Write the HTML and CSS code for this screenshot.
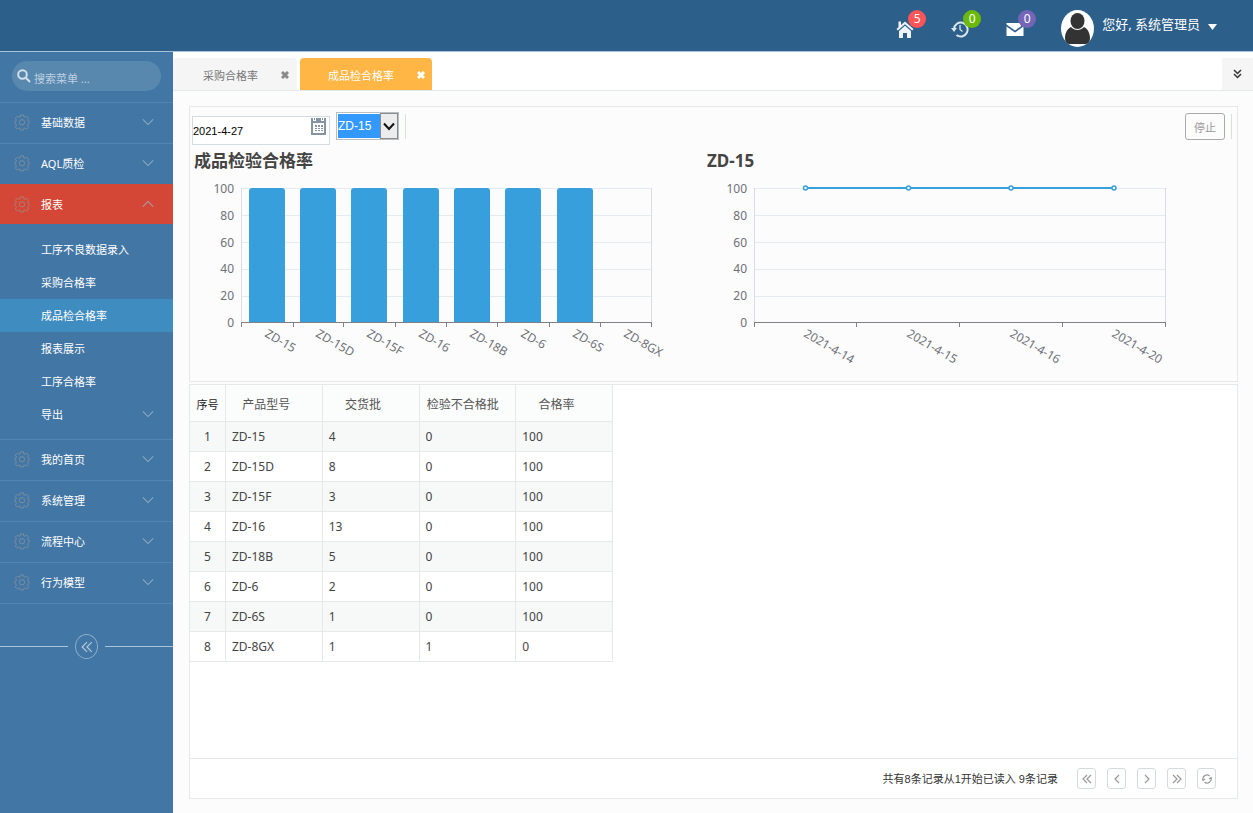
FILE: index.html
```html
<!DOCTYPE html>
<html lang="zh-CN">
<head>
    <meta charset="UTF-8">
    <meta name="viewport" content="width=device-width, initial-scale=1.0">
    <title>成品检合格率</title>
    <link rel="stylesheet" href="styles.css">
</head>
<body>
    <!-- shared icons -->
    <svg class="symbols" aria-hidden="true">
        <symbol id="gear" viewBox="0 0 18 18">
            <path d="M7.4 1h3.2l.5 2.2 1.2.5 2-1.2 2.2 2.2-1.2 2 .5 1.2 1.2.4v2.4l-1.2.8-.5 1.3 1.2 1.9-2.2 2.2-2-1.2-1.2.5-.5 1.8H7.4l-.5-1.8-1.2-.5-2 1.2-2.2-2.2 1.2-1.9-.5-1.3L1 10.700V8.300l1.200-.4.5-1.200-1.200-2 2.200-2.200 2 1.200 1.200-.5z"/>
            <circle cx="9" cy="9.300" r="3"/>
        </symbol>
        <symbol id="down" viewBox="0 0 14 8"><path d="M1 1l6 6 6-6"/></symbol>
        <symbol id="up" viewBox="0 0 14 8"><path d="M1 7l6-6 6 6"/></symbol>
        <symbol id="cross" viewBox="0 0 8 8"><path d="M1 1l6 6M7 1L1 7"/></symbol>
        <symbol id="double-left" viewBox="0 0 10 10"><path d="M5 1L1 5l4 4M9 1L5 5l4 4"/></symbol>
        <symbol id="double-right" viewBox="0 0 10 10"><path d="M1 1l4 4-4 4M5 1l4 4-4 4"/></symbol>
    </svg>

    <header class="header">
        <a class="header-link" href="#" aria-label="首页">
            <svg width="18" height="18" viewBox="0 0 18 18"><path fill="#f0f4f8" d="M9 1.500L17.500 9l-1.300 1.400L9 4.200l-7.200 6.200L.5 9l2-1.800V1.500H5V5zM9 5.800l6 5.200v7h-4v-5H7v5H3v-7z"/></svg>
            <span class="badge badge-red">5</span>
        </a>
        <a class="header-link" href="#" aria-label="历史">
            <svg width="18" height="18" viewBox="0 0 18 18"><path fill="none" stroke="#dbe6ef" stroke-width="2" d="M3 9a6.800 7 0 1 1 2.500 6"/><path fill="#dbe6ef" d="M0 8h6l-3 4z"/><path fill="none" stroke="#dbe6ef" stroke-width="1.300" d="M9 5v4.500l2.500 2"/></svg>
            <span class="badge badge-green">0</span>
        </a>
        <a class="header-link" href="#" aria-label="消息">
            <svg width="18" height="18" viewBox="0 0 18 18"><path fill="#fff" d="M.5 3h17v1.500L9 10.500.5 4.500zM.5 6.500l8.500 6 8.500-6V16H.5z"/></svg>
            <span class="badge badge-purple">0</span>
        </a>
        <button class="user" type="button">
            <svg class="avatar" width="33" height="37" viewBox="0 0 33 37">
                <ellipse cx="16.500" cy="18.500" rx="16.500" ry="18.500" fill="#fff"/>
                <ellipse cx="16.500" cy="11" rx="7" ry="8" fill="#333"/>
                <path fill="#333" d="M10 17c3.500 4 9.500 4 13 0 3.500 1.500 6 6 6 11 0 3.500-2 6-5 6H9c-3 0-5-2.500-5-6 0-5 2.500-9.500 6-11z"/>
            </svg>
            <span>您好, 系统管理员</span>
            <svg width="9" height="6" viewBox="0 0 9 6"><path fill="#fff" d="M0 0h9L4.500 6z"/></svg>
        </button>
    </header>

    <div class="layout">
        <aside class="sidebar">
            <div class="search">
                <svg width="14" height="14" viewBox="0 0 14 14"><circle cx="5.500" cy="5.500" r="4.300"/><path d="M8.800 8.800L13 13"/></svg>
                <input type="text" placeholder="搜索菜单 ..." aria-label="搜索菜单">
            </div>
            <nav class="menu">
                <a class="menu-item" href="#"><svg class="gear"><use href="#gear"/></svg><span>基础数据</span><svg class="arrow"><use href="#down"/></svg></a>
                <a class="menu-item" href="#"><svg class="gear"><use href="#gear"/></svg><span>AQL质检</span><svg class="arrow"><use href="#down"/></svg></a>
                <a class="menu-item active" href="#"><svg class="gear"><use href="#gear"/></svg><span>报表</span><svg class="arrow"><use href="#up"/></svg></a>
                <div class="submenu">
                    <a href="#">工序不良数据录入</a>
                    <a href="#">采购合格率</a>
                    <a class="current" href="#">成品检合格率</a>
                    <a href="#">报表展示</a>
                    <a href="#">工序合格率</a>
                    <a href="#"><span>导出</span><svg class="arrow"><use href="#down"/></svg></a>
                </div>
                <a class="menu-item" href="#"><svg class="gear"><use href="#gear"/></svg><span>我的首页</span><svg class="arrow"><use href="#down"/></svg></a>
                <a class="menu-item" href="#"><svg class="gear"><use href="#gear"/></svg><span>系统管理</span><svg class="arrow"><use href="#down"/></svg></a>
                <a class="menu-item" href="#"><svg class="gear"><use href="#gear"/></svg><span>流程中心</span><svg class="arrow"><use href="#down"/></svg></a>
                <a class="menu-item" href="#"><svg class="gear"><use href="#gear"/></svg><span>行为模型</span><svg class="arrow"><use href="#down"/></svg></a>
            </nav>
            <div class="collapse">
                <button type="button" aria-label="收起菜单"><svg width="12" height="12"><use href="#double-left"/></svg></button>
            </div>
        </aside>

        <main class="main">
            <div class="tabs">
                <div class="tab">
                    <a href="#">采购合格率</a>
                    <button type="button" aria-label="关闭采购合格率"><svg width="8" height="8"><use href="#cross"/></svg></button>
                </div>
                <div class="tab tab-active">
                    <a href="#">成品检合格率</a>
                    <button type="button" aria-label="关闭成品检合格率"><svg width="8" height="8"><use href="#cross"/></svg></button>
                </div>
                <button class="tabs-more" type="button" aria-label="更多标签">
                    <svg width="9" height="10" viewBox="0 0 9 10"><path d="M1 1l3.500 3.500L8 1M1 5l3.500 3.500L8 5"/></svg>
                </button>
            </div>

            <div class="content">
                <section class="panel">
                    <div class="toolbar">
                        <div class="date-box">
                            <input type="text" value="2021-4-27" aria-label="日期">
                            <button type="button" aria-label="选择日期">
                                <svg width="15" height="18" viewBox="0 0 15 18">
                                    <path fill="#8494a3" d="M0 1h2v3h3V1h5v3h3V1h2v17H0z"/>
                                    <path fill="#8494a3" d="M3 1h1v2H3zM11 1h1v2h-1z"/>
                                    <path fill="#fff" d="M2 6h11v10H2z"/>
                                    <path fill="#8494a3" d="M4 8h2v2H4zM7 8h2v2H7zM10 8h2v2h-2zM4 11h2v1H4zM7 11h2v1H7zM10 11h2v1h-2zM4 13h2v1H4zM7 13h2v1H7zM10 13h2v1h-2z"/>
                                </svg>
                            </button>
                        </div>
                        <div class="select-box">
                            <select aria-label="产品型号">
                                <option>ZD-15</option>
                                <option>ZD-15D</option>
                                <option>ZD-15F</option>
                                <option>ZD-16</option>
                            </select>
                            <span class="select-arrow"><svg width="12" height="9" viewBox="0 0 12 9"><path d="M1 1.500l5 5.500 5-5.500"/></svg></span>
                        </div>
                        <span class="divider"></span>
                        <button class="stop-button" type="button">停止</button>
                        <span class="divider"></span>
                    </div>

                    <div class="charts">
                        <div class="chart">
                            <h2>成品检验合格率</h2>
                            <svg viewBox="0 0 513 206" role="img" aria-label="成品检验合格率">
                                <path class="grid-line" d="M51 13.500h411M51 40.500h411M51 67.500h411M51 94.500h411M51 121.500h411"/>
                                <path class="frame" d="M51.500 13v135M461.500 13v135"/>
                                <g class="bars">
                                    <path d="M59 148V16q0-3 3-3h30q3 0 3 3v132z"/>
                                    <path d="M110 148V16q0-3 3-3h30q3 0 3 3v132z"/>
                                    <path d="M161 148V16q0-3 3-3h30q3 0 3 3v132z"/>
                                    <path d="M213 148V16q0-3 3-3h30q3 0 3 3v132z"/>
                                    <path d="M264 148V16q0-3 3-3h30q3 0 3 3v132z"/>
                                    <path d="M315 148V16q0-3 3-3h30q3 0 3 3v132z"/>
                                    <path d="M367 148V16q0-3 3-3h30q3 0 3 3v132z"/>
                                </g>
                                <path class="axis" d="M51 147.500h411M51.500 148v4M103.500 148v4M153.500 148v4M205.500 148v4M256.500 148v4M307.500 148v4M359.500 148v4M410.500 148v4M461.500 148v4"/>
                                <g class="y-labels">
                                    <text x="44" y="18">100</text>
                                    <text x="44" y="45">80</text>
                                    <text x="44" y="72">60</text>
                                    <text x="44" y="98">40</text>
                                    <text x="44" y="125">20</text>
                                    <text x="44" y="152">0</text>
                                </g>
                                <g class="x-labels">
                                    <text transform="translate(74 161) rotate(30)">ZD-15</text>
                                    <text transform="translate(125 161) rotate(30)">ZD-15D</text>
                                    <text transform="translate(176 161) rotate(30)">ZD-15F</text>
                                    <text transform="translate(228 161) rotate(30)">ZD-16</text>
                                    <text transform="translate(279 161) rotate(30)">ZD-18B</text>
                                    <text transform="translate(330 161) rotate(30)">ZD-6</text>
                                    <text transform="translate(382 161) rotate(30)">ZD-6S</text>
                                    <text transform="translate(433 161) rotate(30)">ZD-8GX</text>
                                </g>
                            </svg>
                        </div>
                        <div class="chart">
                            <h2>ZD-15</h2>
                            <svg viewBox="0 0 513 206" role="img" aria-label="ZD-15">
                                <path class="grid-line" d="M51 13.500h411M51 40.500h411M51 67.500h411M51 94.500h411M51 121.500h411"/>
                                <path class="frame" d="M51.500 13v135M462.500 13v135"/>
                                <path class="axis" d="M51 147.500h412M51.500 148v4M153.500 148v4M256.500 148v4M359.500 148v4M462.500 148v4"/>
                                <path class="line" d="M102 13h309"/>
                                <g class="points">
                                    <circle cx="102.500" cy="13" r="2"/>
                                    <circle cx="205.500" cy="13" r="2"/>
                                    <circle cx="308" cy="13" r="2"/>
                                    <circle cx="411" cy="13" r="2"/>
                                </g>
                                <g class="y-labels">
                                    <text x="44" y="18">100</text>
                                    <text x="44" y="45">80</text>
                                    <text x="44" y="72">60</text>
                                    <text x="44" y="98">40</text>
                                    <text x="44" y="125">20</text>
                                    <text x="44" y="152">0</text>
                                </g>
                                <g class="x-labels">
                                    <text transform="translate(100 161) rotate(30)">2021-4-14</text>
                                    <text transform="translate(203 161) rotate(30)">2021-4-15</text>
                                    <text transform="translate(306 161) rotate(30)">2021-4-16</text>
                                    <text transform="translate(408 161) rotate(30)">2021-4-20</text>
                                </g>
                            </svg>
                        </div>
                    </div>
                </section>

                <section class="panel grid-panel">
                    <div class="grid-body">
                        <table class="grid">
                            <thead>
                                <tr><th>序号</th><th>产品型号</th><th>交货批</th><th>检验不合格批</th><th>合格率</th></tr>
                            </thead>
                            <tbody>
                                <tr><td>1</td><td>ZD-15</td><td>4</td><td>0</td><td>100</td></tr>
                                <tr><td>2</td><td>ZD-15D</td><td>8</td><td>0</td><td>100</td></tr>
                                <tr><td>3</td><td>ZD-15F</td><td>3</td><td>0</td><td>100</td></tr>
                                <tr><td>4</td><td>ZD-16</td><td>13</td><td>0</td><td>100</td></tr>
                                <tr><td>5</td><td>ZD-18B</td><td>5</td><td>0</td><td>100</td></tr>
                                <tr><td>6</td><td>ZD-6</td><td>2</td><td>0</td><td>100</td></tr>
                                <tr><td>7</td><td>ZD-6S</td><td>1</td><td>0</td><td>100</td></tr>
                                <tr><td>8</td><td>ZD-8GX</td><td>1</td><td>1</td><td>0</td></tr>
                            </tbody>
                        </table>
                    </div>
                    <footer class="pager">
                        <span class="pager-info">共有8条记录从1开始已读入 9条记录</span>
                        <button type="button" aria-label="第一页"><svg width="10" height="10"><use href="#double-left"/></svg></button>
                        <button type="button" aria-label="上一页"><svg width="10" height="10" viewBox="0 0 10 10"><path d="M7 1L3 5l4 4"/></svg></button>
                        <button type="button" aria-label="下一页"><svg width="10" height="10" viewBox="0 0 10 10"><path d="M3 1l4 4-4 4"/></svg></button>
                        <button type="button" aria-label="最后一页"><svg width="10" height="10"><use href="#double-right"/></svg></button>
                        <button type="button" aria-label="刷新"><svg width="10" height="10" viewBox="0 0 10 10"><path d="M1 6a4 4 0 0 1 6.500-4M9 4a4 4 0 0 1-6.500 4M0 5l1 1.500L3 5M7 5l2-1.500L10 5"/></svg></button>
                    </footer>
                </section>
            </div>
        </main>
    </div>
</body>
</html>
```

FILE: styles.css
```css
* {
    box-sizing: border-box;
}

body {
    margin: 0;
    min-height: 100vh;
    display: flex;
    flex-direction: column;
    font-family: "Noto Sans", "Noto Sans CJK SC", sans-serif;
    font-size: 12px;
    color: #444;
    background: #fcfcfc;
}

a {
    color: inherit;
    text-decoration: none;
}

button {
    font: inherit;
    color: inherit;
    padding: 0;
    border: none;
    background: none;
    cursor: pointer;
}

svg {
    display: block;
    flex-shrink: 0;
}

.symbols {
    position: absolute;
    width: 0;
    height: 0;
}

/* header */
.header {
    height: 52px;
    padding: 2px 36px 0 16px;
    display: flex;
    justify-content: flex-end;
    align-items: center;
    gap: 37px;
    background: #2c5f8a;
    border-bottom: 1px solid #a9c3dc;
}

.header-link {
    position: relative;
    padding-top: 4px;
}

.badge {
    position: absolute;
    top: -6px;
    left: 12px;
    width: 18px;
    height: 18px;
    border-radius: 50%;
    line-height: 18px;
    text-align: center;
    font-size: 12px;
    color: #fff;
}

.badge-red {
    background: #fb5558;
}

.badge-green {
    background: #6cb90a;
}

.badge-purple {
    background: #7565b8;
}

.user {
    display: flex;
    align-items: center;
    gap: 8px;
    font-size: 13px;
    line-height: 18px;
    color: #fff;
}

.user span {
    padding-bottom: 6px;
}

.avatar {
    margin-top: 4px;
}

.layout {
    flex: 1;
    display: flex;
}

/* sidebar */
.sidebar {
    width: 173px;
    flex-shrink: 0;
    font-size: 11px;
    color: #fff;
    background: #4276a5;
}

.search {
    height: 30px;
    margin: 9px 12px 11px;
    padding: 0 5px;
    display: flex;
    align-items: center;
    gap: 3px;
    border-radius: 15px;
    background: #5888ae;
}

.search svg {
    fill: none;
    stroke: #d3dfe9;
    stroke-width: 2;
}

.search input {
    width: 100%;
    min-width: 0;
    padding: 4px 0 0;
    border: none;
    outline: none;
    font: inherit;
    color: #fff;
    background: none;
}

.search input::placeholder {
    color: #bdd0e0;
}

.menu {
    border-bottom: 1px solid #4f86b8;
}

.menu-item {
    height: 41px;
    padding: 0 19px 2px 14px;
    display: flex;
    align-items: center;
    gap: 11px;
    border-top: 1px solid #4f86b8;
}

.menu-item.active {
    height: 40px;
    border-color: #d44635;
    background: #d44635;
}

.gear {
    width: 16px;
    height: 18px;
    fill: none;
    stroke: #9a9a9a;
    stroke-opacity: 0.7;
}

.arrow {
    width: 12px;
    height: 8px;
    margin-left: auto;
    fill: none;
    stroke: #9fb6cb;
    stroke-opacity: 0.8;
    stroke-width: 1.2;
}

.submenu {
    padding: 9px 0 8px;
}

.submenu a {
    height: 33px;
    padding: 0 19px 2px 41px;
    display: flex;
    align-items: center;
}

.submenu .current {
    background: #3f8dc0;
}

.collapse {
    margin-top: 30px;
    display: flex;
    align-items: center;
    gap: 7px;
}

.collapse::before,
.collapse::after {
    content: "";
    flex: 1;
    height: 1px;
    background: #a9c3dc;
}

.collapse button {
    width: 23px;
    height: 25px;
    display: flex;
    align-items: center;
    justify-content: center;
    border: 1px solid #8eadc9;
    border-radius: 50%;
}

.collapse svg {
    fill: none;
    stroke: #b4c9dc;
}

/* tabs */
.main {
    flex: 1;
    min-width: 0;
    display: flex;
    flex-direction: column;
}

.tabs {
    height: 39px;
    padding-top: 6px;
    display: flex;
    gap: 3px;
    font-size: 11px;
    background: #fff;
    border-bottom: 1px solid #e4e9ec;
}

.tab {
    padding: 2px 8px 0 30px;
    display: flex;
    align-items: center;
    gap: 23px;
    color: #777;
    background: #f5f5f5;
    border-radius: 4px 4px 0 0;
}

.tab-active {
    padding: 2px 7px 0 28px;
    color: #fff;
    background: #ffb644;
}

.tab svg {
    fill: none;
    stroke: #8a8a8a;
    stroke-width: 3;
}

.tab-active svg {
    stroke: #fff;
}

.tabs-more {
    width: 31px;
    margin-left: auto;
    display: flex;
    align-items: center;
    justify-content: center;
    background: #f5f5f5;
}

.tabs-more svg {
    fill: none;
    stroke: #333;
    stroke-width: 1.5;
}

.content {
    flex: 1;
    padding: 15px 15px 14px 16px;
    display: flex;
    flex-direction: column;
    gap: 2px;
}

.panel {
    border: 1px solid #e6e9eb;
}

/* toolbar */
.toolbar {
    height: 39px;
    padding: 5px 5px 0 2px;
    display: flex;
    align-items: flex-start;
    gap: 6px;
}

.date-box {
    width: 138px;
    height: 29px;
    margin-top: 4px;
    padding-right: 3px;
    display: flex;
    border: 1px solid #d5dbe2;
    background: #fff;
}

.date-box input {
    flex: 1;
    min-width: 0;
    padding: 0;
    border: none;
    outline: none;
    font-family: "Liberation Sans", Arial, sans-serif;
    font-size: 11px;
    color: #000;
    background: none;
}

.date-box button {
    align-self: flex-start;
}

.select-box {
    position: relative;
    width: 63px;
    height: 28px;
    border: 1px solid #b9bec4;
    background: #fff;
}

.select-box select {
    width: 100%;
    height: 26px;
    padding: 0 20px 0 0;
    appearance: none;
    border: 1px solid #fff;
    border-radius: 0;
    outline: none;
    font-family: "Liberation Sans", Arial, sans-serif;
    font-size: 12px;
    color: #fff;
    background: #3399ff;
}

.select-arrow {
    position: absolute;
    top: 0;
    right: 0;
    bottom: 0;
    width: 18px;
    display: flex;
    align-items: center;
    justify-content: center;
    border: 1px solid #8c8c8c;
    background: #ececec;
    pointer-events: none;
}

.select-arrow svg {
    fill: none;
    stroke: #111;
    stroke-width: 2;
}

.divider {
    width: 1px;
    height: 25px;
    margin-top: 2px;
    background: #d9e2d9;
}

.stop-button {
    width: 40px;
    height: 27px;
    margin-top: 1px;
    margin-left: auto;
    font-size: 11px;
    color: #999;
    border: 1px solid #aaa;
    border-radius: 3px;
}

/* charts */
.charts {
    padding-right: 21px;
    display: grid;
    grid-template-columns: 1fr 1fr;
}

.chart h2 {
    margin: 0;
    padding-left: 4px;
    font-size: 17px;
    line-height: 29px;
    color: #444;
}

.chart svg {
    width: 100%;
    height: auto;
    overflow: visible;
    fill: none;
}

.grid-line {
    stroke: #e6ebf2;
}

.frame {
    stroke: #d9dce3;
}

.axis {
    stroke: #80808a;
}

.bars {
    fill: #37a0dc;
}

.line {
    stroke: #37a0dc;
    stroke-width: 2;
}

.points {
    fill: #fff;
    stroke: #37a0dc;
    stroke-width: 1.5;
}

.y-labels,
.x-labels {
    font-size: 12px;
    fill: #6e7079;
}

.y-labels {
    text-anchor: end;
}

/* data grid */
.grid-panel {
    flex: 1;
    display: flex;
    flex-direction: column;
    background: #fff;
}

.grid-body {
    flex: 1;
}

.grid {
    table-layout: fixed;
    width: 423px;
    border-collapse: separate;
    border-spacing: 0;
}

.grid th,
.grid td {
    height: 30px;
    padding: 0 6px;
    text-align: left;
    border-right: 1px solid #e6e9e9;
    border-bottom: 1px solid #e6e9e9;
}

.grid th {
    height: 37px;
    padding: 2px 15px 0 0;
    font-weight: normal;
    text-align: center;
    white-space: nowrap;
    color: #555;
    background: #fbfcfc;
}

.grid th:nth-child(4) {
    padding: 2px 9px 0 0;
}

.grid th:first-child {
    width: 36px;
    padding: 2px 0 0;
    font-size: 11px;
    color: #222;
}

.grid td:first-child {
    padding: 0;
    text-align: center;
}

.grid tbody tr:nth-child(odd) {
    background: #f6f9f8;
}

.pager {
    height: 40px;
    padding-right: 21px;
    display: flex;
    align-items: center;
    justify-content: flex-end;
    gap: 11px;
    border-top: 1px solid #e4e7e9;
}

.pager-info {
    margin-right: 8px;
    padding-bottom: 2px;
    font-family: "Liberation Sans", "Noto Sans CJK SC", sans-serif;
    font-size: 11px;
    color: #333;
}

.pager button {
    width: 19px;
    height: 21px;
    display: flex;
    align-items: center;
    justify-content: center;
    border: 1px solid #d5dade;
    border-radius: 3px;
}

.pager svg {
    fill: none;
    stroke: #999;
    stroke-width: 1.2;
}

@media (max-width: 800px) {
    .charts {
        grid-template-columns: 1fr;
    }
}
```
